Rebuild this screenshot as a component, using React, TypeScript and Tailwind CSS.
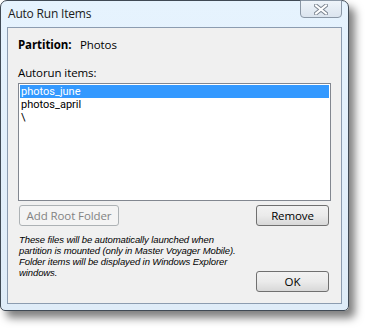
export default function App() {
  const ui = { fontFamily: '"Open Sans", "Noto Sans", sans-serif' };
  const list = { fontFamily: 'Roboto, "Open Sans", sans-serif' };
  const note = { fontFamily: '"Liberation Sans", "DejaVu Sans", sans-serif' };

  return (
    <div className="w-[365px] h-[328px] bg-white" style={ui}>
      <div className="relative w-[349px] h-[311px] flex flex-col rounded-t-[7px] rounded-b-[5px] border border-[#404a55] bg-gradient-to-b from-[#e6f3fe] to-[#dfecf8] shadow-[6px_7px_9px_rgba(0,0,0,0.5)]">
        <div className="h-[26px] flex items-center pl-[7px] text-[12px] text-[#1b1b1b] tracking-[-0.2px]">
          Auto Run Items
        </div>

        {/* close button */}
        <div className="absolute top-[-1px] right-[6px] w-[42px] h-[18px] rounded-b-[4px] border border-[#8a97a6] bg-gradient-to-b from-[#eef4fa] to-[#dbe4ee] flex items-center justify-center">
          <svg width="14" height="11" viewBox="0 0 14 11">
            <path d="M2 1.5 L12 9.5 M12 1.5 L2 9.5" stroke="#7c8591" strokeWidth="4" strokeLinecap="square" />
            <path d="M2 1.5 L12 9.5 M12 1.5 L2 9.5" stroke="#ffffff" strokeWidth="2" strokeLinecap="square" />
          </svg>
        </div>

        <div className="mx-[6px] mb-[6px] flex-1 flex flex-col border border-[#8c9cb0] bg-[#f0f0f0] px-[10px] text-[11.5px] leading-[16px] text-black tracking-[-0.1px]">
          <div className="mt-[9px] h-[16px] flex items-center">
            <span className="font-bold w-[62px]">Partition:</span>
            <span>Photos</span>
          </div>

          <div className="mt-[12px] h-[16px] flex items-center">Autorun items:</div>

          <div className="mt-[2px] h-[118px] border border-[#828790] bg-white p-[1px] text-[11px] tracking-normal" style={list}>
            <div className="h-[13px] leading-[13px] bg-[#3399ff] text-white pl-[1px]">photos_june</div>
            <div className="h-[13px] leading-[13px] pl-[1px]">photos_april</div>
            <div className="h-[13px] leading-[13px] pl-[1px]">\</div>
          </div>

          <div className="mt-[4px] flex justify-between pr-[2px]">
            <div className="ml-[1px] w-[100px] h-[21px] rounded-[3px] border border-[#adb2b5] bg-[#f4f4f4] text-[#838383] flex items-center justify-center">
              Add Root Folder
            </div>
            <div className="w-[73px] h-[21px] rounded-[3px] border border-[#707070] bg-gradient-to-b from-[#f2f2f2] via-[#ebebeb] to-[#d8d8d8] flex items-center justify-center">
              Remove
            </div>
          </div>

          <div className="flex-1 flex justify-between pr-[2px] pb-[11px]">
            <div className="ml-[1px] mt-[8px] whitespace-nowrap text-[9.5px] leading-[11px] italic" style={note}>
              These files will be automatically launched when<br />
              partition is mounted (only in Master Voyager Mobile).<br />
              Folder items will be displayed in Windows Explorer<br />
              windows.
            </div>
            <div className="self-end w-[73px] h-[21px] rounded-[3px] border border-[#707070] bg-gradient-to-b from-[#f2f2f2] via-[#ebebeb] to-[#d8d8d8] flex items-center justify-center">
              OK
            </div>
          </div>
        </div>
      </div>
    </div>
  );
}
